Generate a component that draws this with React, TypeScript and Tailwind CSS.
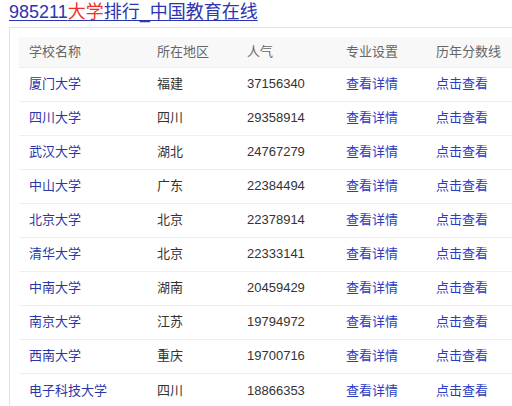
import React from "react";

const schools = [
  { name: "厦门大学", area: "福建", hot: "37156340" },
  { name: "四川大学", area: "四川", hot: "29358914" },
  { name: "武汉大学", area: "湖北", hot: "24767279" },
  { name: "中山大学", area: "广东", hot: "22384494" },
  { name: "北京大学", area: "北京", hot: "22378914" },
  { name: "清华大学", area: "北京", hot: "22333141" },
  { name: "中南大学", area: "湖南", hot: "20459429" },
  { name: "南京大学", area: "江苏", hot: "19794972" },
  { name: "西南大学", area: "重庆", hot: "19700716" },
  { name: "电子科技大学", area: "四川", hot: "18866353" },
];

export default function App() {
  return (
    <div
      className="w-[512px] h-[406px] overflow-hidden bg-white pl-[9px]"
      style={{ fontFamily: '"Liberation Sans", "Noto Sans CJK SC", sans-serif' }}
    >
      <div className="h-[27px] leading-[24px] text-[18px]">
        <a href="#" className="text-[#2c35b0] underline underline-offset-[2px]">
          985211<span className="text-[#f0302a]">大学</span>排行_中国教育在线
        </a>
      </div>
      <div className="w-[560px] border-t border-l border-[#e3e3e3] pl-[9px] pt-[9px]">
        <table className="w-[540px] border-collapse text-[13px]">
          <thead>
            <tr className="h-[30px] bg-[#f8f8f8] text-[#666] text-left">
              <th className="w-[128px] pl-[10px] font-normal">学校名称</th>
              <th className="w-[90px] pl-[10px] font-normal">所在地区</th>
              <th className="w-[99px] pl-[10px] font-normal">人气</th>
              <th className="w-[90px] pl-[10px] font-normal">专业设置</th>
              <th className="pl-[10px] font-normal">历年分数线</th>
            </tr>
          </thead>
          <tbody>
            {schools.map((s) => (
              <tr key={s.name} className="h-[34px] border-t border-[#eeeeee]">
                <td className="pl-[10px] text-[#2c35a8]">{s.name}</td>
                <td className="pl-[10px] text-[#333]">{s.area}</td>
                <td className="pl-[10px] text-[#333]">{s.hot}</td>
                <td className="pl-[10px] text-[#2a3bc4]">查看详情</td>
                <td className="pl-[10px] text-[#2a3bc4]">点击查看</td>
              </tr>
            ))}
          </tbody>
        </table>
      </div>
    </div>
  );
}
